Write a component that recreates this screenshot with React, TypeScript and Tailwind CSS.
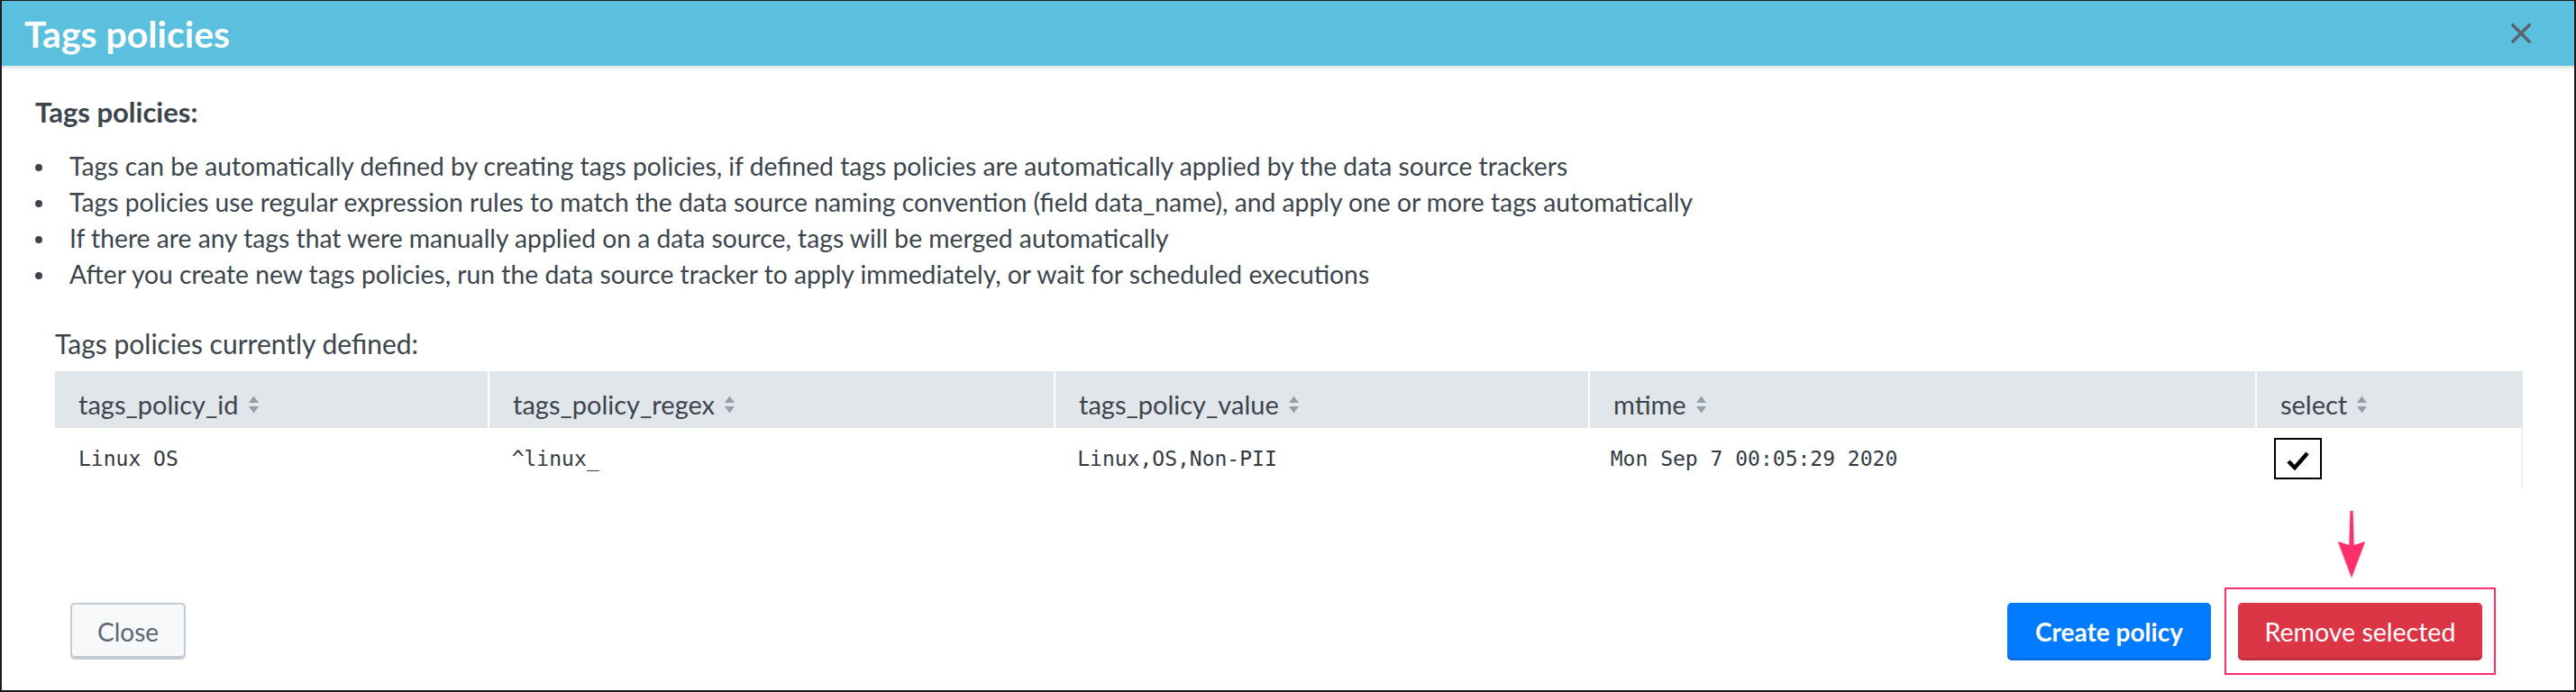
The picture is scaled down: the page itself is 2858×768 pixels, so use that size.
import React from "react";

type Row = { id: string; regex: string; value: string; mtime: string; selected: boolean };

const COLUMNS: { key: string; label: string; width: string }[] = [
  { key: "id", label: "tags_policy_id", width: "w-[480px]" },
  { key: "regex", label: "tags_policy_regex", width: "w-[628px]" },
  { key: "value", label: "tags_policy_value", width: "w-[593px]" },
  { key: "mtime", label: "mtime", width: "w-[740px]" },
  { key: "select", label: "select", width: "w-[297px]" },
];

const ROWS: Row[] = [
  { id: "Linux OS", regex: "^linux_", value: "Linux,OS,Non-PII", mtime: "Mon Sep 7 00:05:29 2020", selected: true },
];

const NOTES = [
  "Tags can be automatically defined by creating tags policies, if defined tags policies are automatically applied by the data source trackers",
  "Tags policies use regular expression rules to match the data source naming convention (field data_name), and apply one or more tags automatically",
  "If there are any tags that were manually applied on a data source, tags will be merged automatically",
  "After you create new tags policies, run the data source tracker to apply immediately, or wait for scheduled executions",
];

function SortIcon() {
  return (
    <svg width="13" height="22" viewBox="0 0 13 22" className="ml-[10px] shrink-0">
      <path d="M6.5 1.5 L12 9 L1 9 Z" fill="#959fa9" />
      <path d="M6.5 20.5 L12 13 L1 13 Z" fill="#959fa9" />
    </svg>
  );
}

function CloseIcon() {
  return (
    <svg width="22" height="22" viewBox="0 0 22 22">
      <path d="M2 2 L20 20 M20 2 L2 20" stroke="#5b6570" strokeWidth="3.5" strokeLinecap="square" />
    </svg>
  );
}

function Checkbox({ checked }: { checked: boolean }) {
  return (
    <div className="w-[53px] h-[46px] border-2 border-black bg-white flex items-center justify-center">
      {checked && (
        <svg width="26" height="24" viewBox="0 0 26 24" className="mt-[6px]">
          <path d="M2 12 L9 19 L23 3" stroke="#000" strokeWidth="4.5" fill="none" strokeLinejoin="miter" />
        </svg>
      )}
    </div>
  );
}

function Arrow() {
  return (
    <svg
      width="34"
      height="74"
      viewBox="0 0 34 74"
      className="absolute left-[122px] bottom-[calc(100%+13px)] drop-shadow-[0_1px_1px_rgba(0,0,0,0.25)]"
    >
      <path d="M15.5 0 L18.5 0 L19.6 38 L32 34 L17 74 L2 34 L14.4 38 Z" fill="#ff2e6c" />
    </svg>
  );
}

export default function App() {
  return (
    <div className="w-[2858px] h-[768px] bg-white border-x-2 border-t border-b-2 border-[#1c1c1c] flex flex-col font-['Lato','Noto_Sans',sans-serif] text-[#3c444d]">
      {/* header */}
      <div className="h-[75px] shrink-0 bg-[#5bc0de] border-b-[3px] border-[#e4e9ec] flex items-center justify-between pl-[25px] pr-[48px]">
        <h1 className="text-[41px] font-bold text-white leading-none">Tags policies</h1>
        <CloseIcon />
      </div>

      {/* body */}
      <div className="pl-[37px] pt-[30px]">
        <h2 className="text-[31px] leading-[37px] font-bold">Tags policies:</h2>
        <ul className="mt-[21px]">
          {NOTES.map((n) => (
            <li key={n} className="flex items-center h-[40px] text-[28.25px] leading-[40px] whitespace-nowrap">
              <span className="w-[38px] shrink-0 flex">
                <span className="w-[8px] h-[8px] rounded-full bg-[#3c444d] mt-[4px]" />
              </span>
              {n}
            </li>
          ))}
        </ul>

        <div className="ml-[22px] mt-[41px]">
          <p className="text-[30px] leading-[32px]">Tags policies currently defined:</p>
          <div className="mt-[15px] w-[2738px]">
            <div className="flex h-[63px] bg-[#e1e6eb]">
              {COLUMNS.map((c, i) => (
                <div
                  key={c.key}
                  className={`${c.width} flex items-center pl-[26px] pt-[10px] text-[29px] ${
                    i > 0 ? "border-l-2 border-white" : ""
                  }`}
                >
                  {c.label}
                  <SortIcon />
                </div>
              ))}
            </div>
            {ROWS.map((r) => (
              <div
                key={r.id}
                className="flex h-[68px] items-center border-r-2 border-[#f1f2f4] font-['DejaVu_Sans_Mono',monospace] text-[23px] text-[#333a42]"
              >
                <div className="w-[480px] pl-[26px]">{r.id}</div>
                <div className="w-[628px] pl-[27px]">{r.regex}</div>
                <div className="w-[593px] pl-[27px]">{r.value}</div>
                <div className="w-[740px] pl-[26px]">{r.mtime}</div>
                <div className="w-[297px] pl-[23px]">
                  <Checkbox checked={r.selected} />
                </div>
              </div>
            ))}
          </div>
        </div>
      </div>

      {/* footer */}
      <div className="mt-auto flex items-center justify-between pl-[76px] pr-[87px] pb-[17px]">
        <button
          type="button"
          className="w-[128px] h-[63px] rounded-[5px] border-2 border-[#c3cbd4] bg-[#f7f8fa] shadow-[inset_0_-2px_0_#c3cbd4] text-[28px] text-[#5c6773]"
        >
          Close
        </button>
        <div className="flex items-center gap-[15px]">
          <button
            type="button"
            className="w-[226px] h-[64px] rounded-[5px] bg-[#037bff] shadow-[inset_0_-3px_0_rgba(0,0,0,0.12)] text-[28px] font-bold text-white"
          >
            Create policy
          </button>
          <div className="relative border-2 border-[#ff2e6c] px-[13px] pt-[15px] pb-[14px]">
            <Arrow />
            <button
              type="button"
              className="w-[271px] h-[64px] rounded-[5px] bg-[#dc3545] shadow-[inset_0_-3px_0_rgba(0,0,0,0.12)] text-[28.5px] text-white"
            >
              Remove selected
            </button>
          </div>
        </div>
      </div>
    </div>
  );
}
